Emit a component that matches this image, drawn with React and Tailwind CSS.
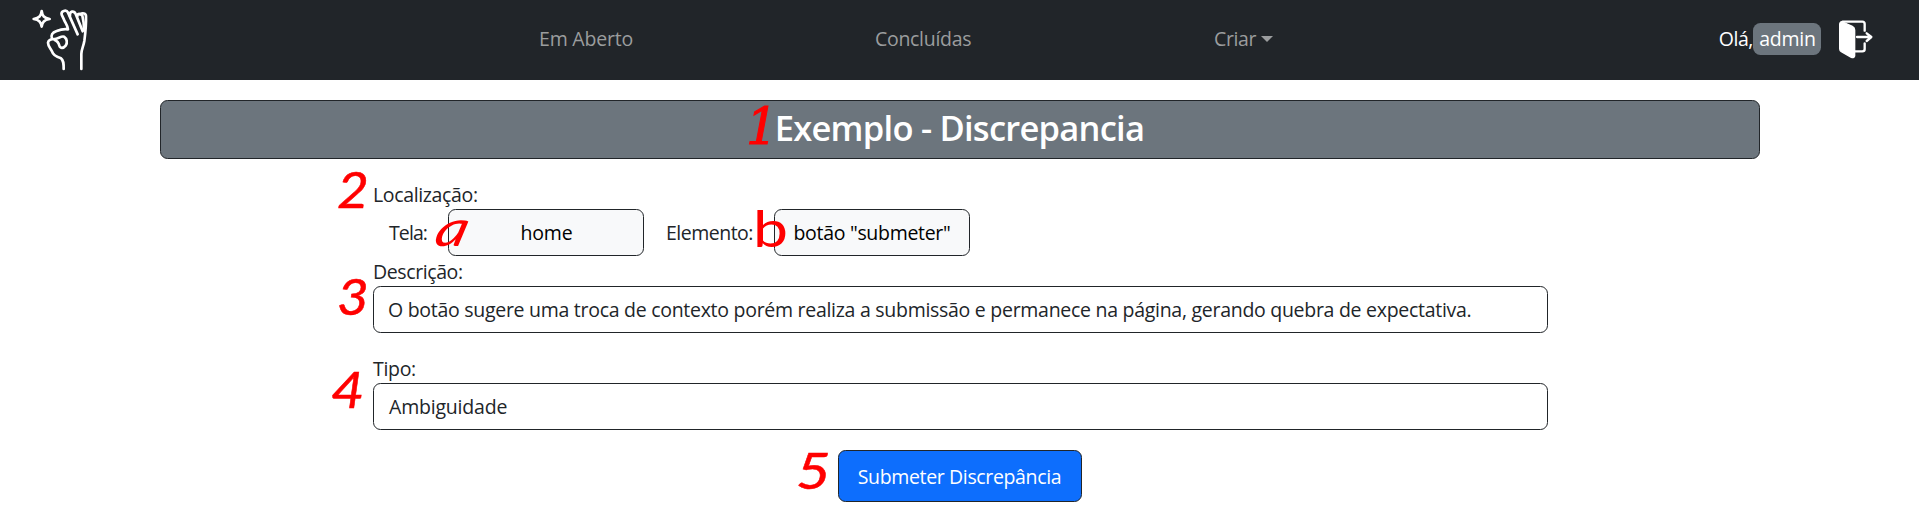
import React from 'react';

function HandLogo() {
  return (
    <svg className="h-20 w-[90px] shrink-0" viewBox="0 0 270 240" fill="none" stroke="#fff" strokeWidth="8" strokeLinecap="round" strokeLinejoin="round">
      <path d="M65 33 C67 48 72 54 89 57 C72 60 67 66 65 80 C63 66 58 60 41 57 C58 54 63 48 65 33Z" />
      <path d="M131 207 C131 190 131 181 123 175 C111 171 99 165 96 154 C91 144 84 138 84 128 C85 120 93 117 103 117 C113 117 124 107 132 110 C141 116 143 128 137 137 C130 146 121 146 118 137 C116 129 113 123 104 120" />
      <path d="M96 116 C92 105 96 98 110 93 C120 89 129 86 144 88 C143 76 136 69 132 59 L125 44 C122 33 139 27 144 38 L173 103" />
      <path d="M150 48 C148 32 162 31 167 42 L188 94" />
      <path d="M172 48 C173 39 182 40 187 47 C191 62 192 77 192 90" />
      <path d="M180 43 C188 38 198 40 198 49 C199 74 196 100 193 123 C190 141 184 148 184 162 L184 207" />
    </svg>
  );
}

function LogoutIcon() {
  return (
    <svg className="mb-[2px] ml-[17px] h-10 w-9 shrink-0" viewBox="0 0 108 120" fill="none" stroke="#fff" strokeWidth="7" strokeLinecap="round" strokeLinejoin="round">
      <path d="M14 8 H73 Q80 8 80 15 V35" />
      <path d="M80 73 V91 Q80 97 73 97 H51" />
      <path d="M57 54 H99 M86 43 L100 54 L86 66" />
      <path d="M8 9 Q9 7 14 9 L43 22 Q50 25 50 33 V111 Q49 117 40 115 L10 98 Q5 95 5 89 V16 Q5 11 8 9Z" fill="#fff" strokeWidth="4" />
    </svg>
  );
}

const label = 'h-[30px] pt-px leading-[30px]';
const field = 'flex h-[47px] items-center rounded-[7.5px] border border-[#212529]';
const mark = 'pointer-events-none absolute origin-bottom-left text-[50px] leading-none text-[#ff0000]';
const lato = 'font-["Lato",sans-serif]';

export default function App() {
  return (
    <div className='relative h-[531px] w-full overflow-hidden bg-white text-[19.5px] text-[#212529] font-["Open_Sans",sans-serif]'>
      <nav className="flex h-20 items-center bg-[#212529] pl-5 text-[#9b9d9e]">
        <HandLogo />
        <div className="flex flex-1 pb-[3px]">
          <a className="ml-[429px] w-[336px] tracking-[-0.2px]">Em Aberto</a>
          <a className="w-[339px] tracking-[-0.3px]">Concluídas</a>
          <a className="flex items-center tracking-[-0.4px]">
            Criar
            <span className="ml-[5px] border-x-[6px] border-t-[6px] border-x-transparent border-t-[#9b9d9e]" />
          </a>
        </div>
        <div className="mr-[45px] flex items-center text-white">
          <span className="pb-[3px] tracking-[-0.4px]">Olá,</span>
          <span className="mb-[3px] flex h-8 w-[68px] items-center justify-center rounded-[7.5px] bg-[#6c757d] pl-px tracking-[-0.2px]">admin</span>
          <LogoutIcon />
        </div>
      </nav>

      <main className="flex flex-col items-center">
        <h1 className="mt-5 flex h-[59px] w-[1600px] items-center justify-center rounded-[7.5px] border border-[#212529] bg-[#6c757d] pb-[3px] text-[34.5px] font-semibold tracking-[-0.75px] text-white">
          Exemplo - Discrepancia
        </h1>

        <form className="mt-5 ml-[2px] flex w-[1175px] flex-col">
          <div className={`${label} tracking-[-0.35px]`}>Localização:</div>
          <div className="flex items-center">
            <span className="w-[75px] pl-4 tracking-[-0.9px]">Tela:</span>
            <div className={`${field} w-[196px] justify-center bg-[#f8f9fa] pl-px tracking-[-0.2px] text-black`}>home</div>
            <span className="w-[130px] pl-[22px] tracking-[-0.5px]">Elemento:</span>
            <div className={`${field} w-[196px] justify-center bg-[#f8f9fa] tracking-[-0.3px] text-black`}>botão "submeter"</div>
          </div>
          <div className={`${label} tracking-[-0.4px]`}>Descrição:</div>
          <div className={`${field} pl-[14px] tracking-[-0.28px] whitespace-nowrap`}>
            O botão sugere uma troca de contexto porém realiza a submissão e permanece na página, gerando quebra de expectativa.
          </div>
          <div className={`${label} mt-5 tracking-[-0.3px]`}>Tipo:</div>
          <div className={`${field} pl-[15px] tracking-[-0.2px]`}>Ambiguidade</div>
          <button type="button" className="mt-5 mr-[2px] h-[52px] w-[244px] self-center rounded-[7.5px] border border-[#212529] bg-[#0d6efd] pt-px tracking-[-0.36px] text-white">
            Submeter Discrepância
          </button>
        </form>
      </main>

      <span className={`${mark} top-[102px] left-[746px] [-webkit-text-stroke:1px_#ff0000] italic font-["DejaVu_Serif",serif]`}>1</span>
      <span className={`${mark} ${lato} top-[164px] left-[337px] scale-x-110 [-webkit-text-stroke:0.5px_#ff0000] italic`}>2</span>
      <span className={`${mark} ${lato} top-[202px] left-[431px] -skew-x-12 scale-x-[1.25] italic`}>a</span>
      <span className={`${mark} ${lato} top-[271px] left-[337px] scale-x-110 [-webkit-text-stroke:0.5px_#ff0000] italic`}>3</span>
      <span className={`${mark} ${lato} top-[203px] left-[753px] scale-x-[1.25]`}>b</span>
      <span className={`${mark} ${lato} top-[364px] left-[331px] scale-x-115 [-webkit-text-stroke:0.5px_#ff0000] italic`}>4</span>
      <span className={`${mark} ${lato} top-[445px] left-[796px] scale-x-[1.2] [-webkit-text-stroke:0.5px_#ff0000] italic`}>5</span>
    </div>
  );
}
